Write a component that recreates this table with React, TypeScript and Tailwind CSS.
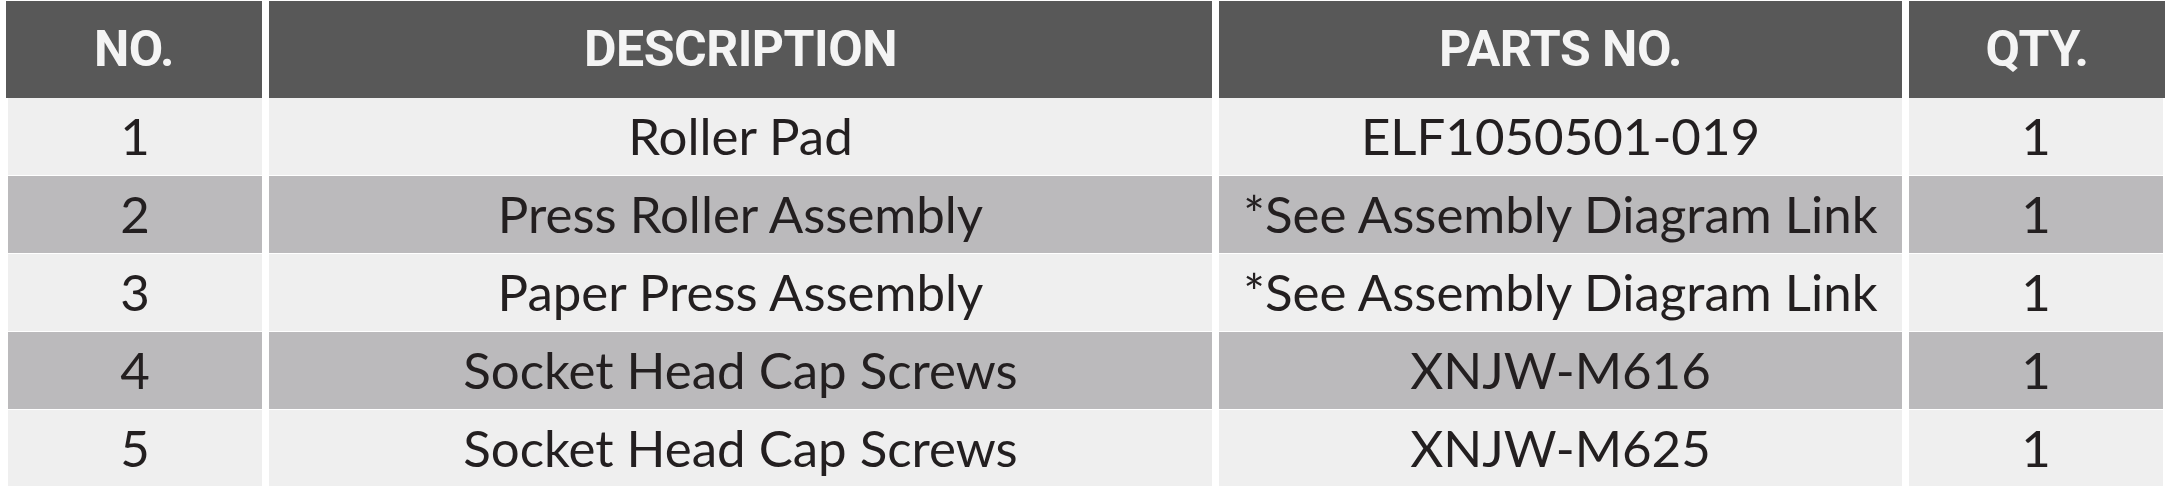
import React from 'react';

interface Part {
    no: number;
    description: string;
    partNo: string;
    qty: number;
}

const parts: Part[] = [
    { no: 1, description: 'Roller Pad', partNo: 'ELF1050501-019', qty: 1 },
    { no: 2, description: 'Press Roller Assembly', partNo: '*See Assembly Diagram Link', qty: 1 },
    { no: 3, description: 'Paper Press Assembly', partNo: '*See Assembly Diagram Link', qty: 1 },
    { no: 4, description: 'Socket Head Cap Screws', partNo: 'XNJW-M616', qty: 1 },
    { no: 5, description: 'Socket Head Cap Screws', partNo: 'XNJW-M625', qty: 1 },
];

const headers = ['NO.', 'DESCRIPTION', 'PARTS NO.', 'QTY.'];

const App: React.FC = () => {
    return (
        <div className="w-[2176px] h-[486px] bg-white pt-[1px] pl-[6px]">
            <div className="w-[2159px] flex flex-col">
                <div className="grid grid-cols-[256px_943px_683px_256px] gap-x-[7px] h-[97px]">
                    {headers.map((h) => (
                        <div
                            key={h}
                            className="bg-[#585858] flex items-center justify-center text-[#f4f4f4] text-[50px] font-bold tracking-[-0.5px] font-['Roboto',sans-serif]"
                        >
                            {h}
                        </div>
                    ))}
                </div>

                <div className="flex flex-col gap-y-[7px]">
                    {parts.map((p, i) => {
                        const bg = i % 2 === 0 ? 'bg-[#efefef]' : 'bg-[#bbbabc]';
                        return (
                            <div
                                key={p.no}
                                className="grid grid-cols-[256px_943px_683px_256px] gap-x-[7px] h-[71px] text-[51px] text-[#231f20] font-['Lato',sans-serif]"
                            >
                                <div className={`${bg} ml-[2px] flex items-center justify-center`}>{p.no}</div>
                                <div className={`${bg} flex items-center justify-center`}>{p.description}</div>
                                <div className={`${bg} flex items-center justify-center`}>{p.partNo}</div>
                                <div className={`${bg} mr-[2px] flex items-center justify-center`}>{p.qty}</div>
                            </div>
                        );
                    })}
                </div>
            </div>
        </div>
    );
};

export default App;
